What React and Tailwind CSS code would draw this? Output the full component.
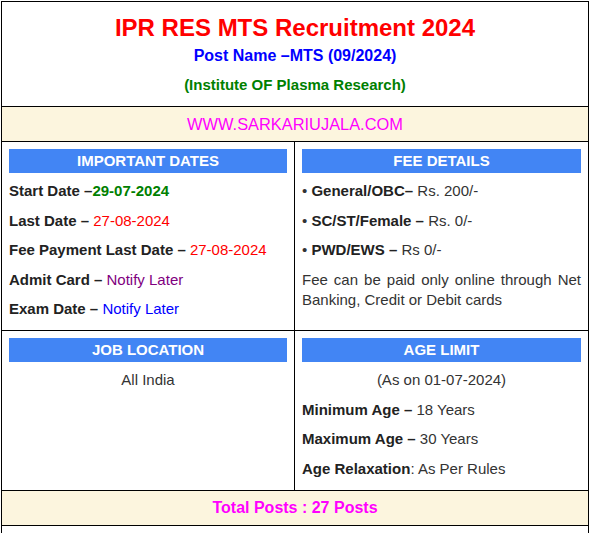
const FEES = [
  { label: 'General/OBC–', value: ' Rs. 200/-' },
  { label: 'SC/ST/Female –', value: ' Rs. 0/-' },
  { label: 'PWD/EWS –', value: ' Rs 0/-' },
];

function Bar({ children }) {
  return (
    <div className="h-[24px] bg-[#4285f4] text-white font-bold text-[15px] leading-[24px] text-center uppercase">
      {children}
    </div>
  );
}

function Cell({ title, children, className = '' }) {
  return (
    <div className={`p-[7px] ${className}`}>
      <Bar>{title}</Bar>
      <div className="flex flex-col gap-[9.5px] pt-[8px] pb-[4px] leading-[20px]">{children}</div>
    </div>
  );
}

export default function App() {
  return (
    <div className="min-h-[533px] bg-white">
      <div className="w-[588px] ml-px mt-px border border-black font-['Liberation_Sans',Arial,sans-serif] text-[15px] text-[#333]">
        {/* Header */}
        <div className="h-[105px] border-b border-black flex flex-col items-center pt-[10px] font-bold">
          <h1 className="text-[24px] leading-[32px] text-[#ff0000]">IPR RES MTS Recruitment 2024</h1>
          <p className="text-[16px] leading-[24px] text-[#0000ff]">Post Name –MTS (09/2024)</p>
          <p className="mt-[6px] text-[15px] leading-[22px] text-[#008000]">(Institute OF Plasma Research)</p>
        </div>

        {/* Website */}
        <div className="h-[35px] border-b border-black bg-[#fcf5de] flex items-center justify-center pt-px text-[16.4px] text-[#ff00ff]">
          WWW.SARKARIUJALA.COM
        </div>

        {/* Dates / Fees */}
        <div className="grid grid-cols-[293px_293px] border-b border-black">
          <Cell title="Important Dates" className="border-r border-black">
            <p><b className="text-[#222]">Start Date –</b><b className="text-[#008000]">29-07-2024</b></p>
            <p><b className="text-[#222]">Last Date – </b><span className="text-[#ff0000]">27-08-2024</span></p>
            <p><b className="text-[#222]">Fee Payment Last Date – </b><span className="text-[#ff0000]">27-08-2024</span></p>
            <p><b className="text-[#222]">Admit Card – </b><span className="text-[#800080]">Notify Later</span></p>
            <p><b className="text-[#222]">Exam Date – </b><span className="text-[#0000ff]">Notify Later</span></p>
          </Cell>
          <Cell title="Fee Details">
            {FEES.map((f) => (
              <p key={f.label}>• <b className="text-[#222]">{f.label}</b>{f.value}</p>
            ))}
            <p className="text-justify">Fee can be paid only online through Net Banking, Credit or Debit cards</p>
          </Cell>
        </div>

        {/* Location / Age */}
        <div className="grid grid-cols-[293px_293px] border-b border-black">
          <Cell title="Job Location" className="border-r border-black">
            <p className="text-center">All India</p>
          </Cell>
          <Cell title="Age Limit">
            <p className="text-center">(As on 01-07-2024)</p>
            <p><b className="text-[#222]">Minimum Age – </b>18 Years</p>
            <p><b className="text-[#222]">Maximum Age – </b>30 Years</p>
            <p><b className="text-[#222]">Age Relaxation</b>: As Per Rules</p>
          </Cell>
        </div>

        {/* Total posts */}
        <div className="h-[35px] border-b border-black bg-[#fcf5de] flex items-center justify-center pt-px text-[16px] font-bold text-[#ff00ff]">
          Total Posts : 27 Posts
        </div>

        {/* Next row, continues below the fold */}
        <div className="h-[40px]"></div>
      </div>
    </div>
  );
}
